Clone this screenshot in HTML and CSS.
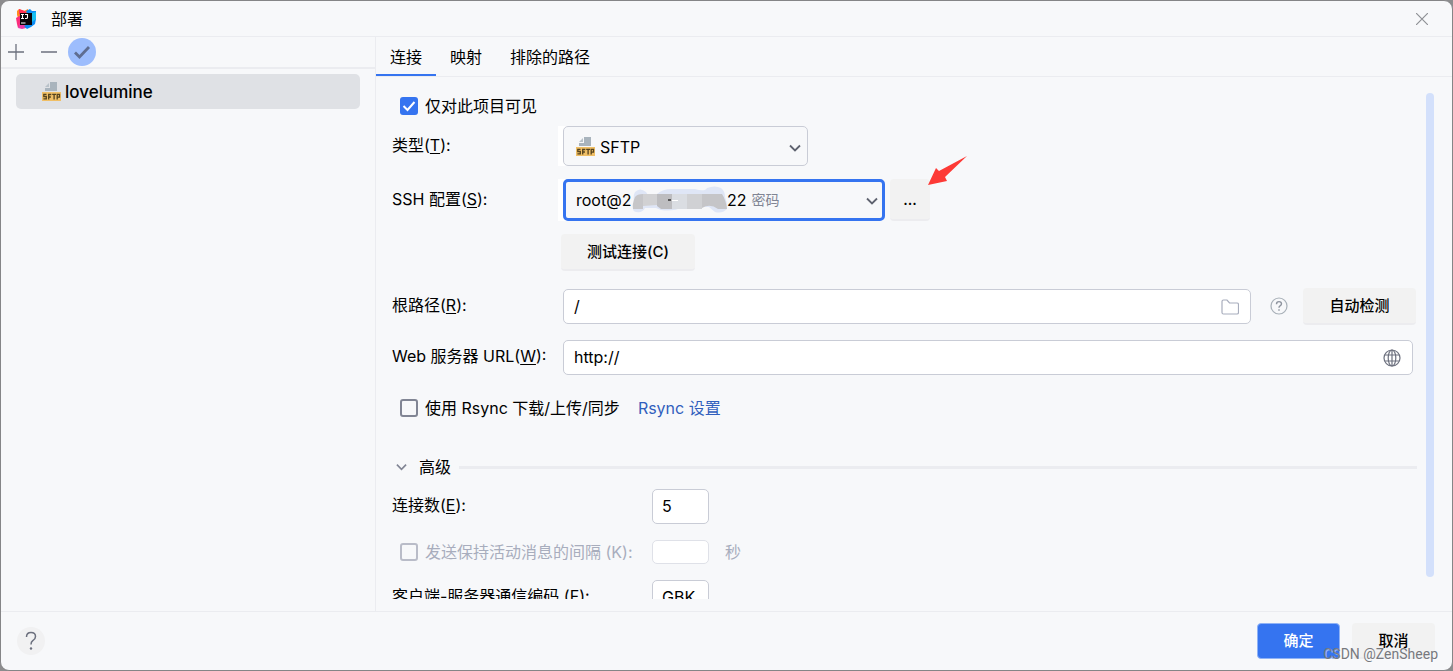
FILE: index.html
```html
<!DOCTYPE html>
<html lang="zh-CN">
<head>
<meta charset="utf-8">
<title>部署</title>
<link rel="stylesheet" href="styles.css">
</head>
<body>
<svg class="defs" aria-hidden="true">
  <symbol id="sftp" viewBox="0 0 19 19">
    <path d="M8 0h7v9H3V6h5z" fill="#a9b4bd"/>
    <path d="M7 1v4H3z" fill="#b9c2c9"/>
    <path d="M0 10h19v9H0z" fill="#f0bf66"/>
    <path d="M4.500 12.300H1.800v2.200h2.500v2.300H1.400M6.700 17.500v-5h2.600M6.700 15h2.200M10.200 12.300h3.800M12.100 12.300v5.200M15.200 17.500v-5.200h2.300v2.900h-2.300" fill="none" stroke="#54431f" stroke-width="1.300"/>
  </symbol>
  <symbol id="chevron" viewBox="0 0 12 8"><path d="M1 1.500l5 5 5-5" fill="none" stroke="currentColor" stroke-width="1.800"/></symbol>
</svg>
<div class="dialog">
  <header class="titlebar">
    <svg class="logo" viewBox="0 0 20 20" aria-hidden="true">
      <path d="M1 2l2-2 5 2 4-2v6L4 14H1l1-5-1-3z" fill="#ff8a1f"/>
      <path d="M3 0l6 2 3 3-6 2-3-2z" fill="#ff3158"/>
      <path d="M0 9l5-3v10l-3 3-1-4z" fill="#fb2d7b"/>
      <path d="M2 19l2-5 8 2-2 3-4 1z" fill="#e93aa8"/>
      <path d="M10 2l4-2 2 2 4 0v8l-1 5-4 3-4 2-3-3 7-4z" fill="#0a8cf5"/>
      <path d="M16 4l4-1v7l-4 3z" fill="#17c0f2"/>
      <path d="M4 4h12v12H4z" fill="#08040a"/>
      <path d="M5 5.500h3M6.500 5.500v4M5 9.500h3M9 5.500h2.500v3q0 1-1.200 1H9M5 14h4.500" fill="none" stroke="#fff" stroke-width="1.100"/>
    </svg>
    <h1 class="title">部署</h1>
    <button class="plain close" aria-label="关闭"><svg viewBox="0 0 12 12" width="12" height="12"><path d="M0 0l12 12M12 0L0 12" stroke="#8f9196" stroke-width="1.200"/></svg></button>
  </header>

  <div class="body">
    <aside class="sidebar">
      <div class="toolbar">
        <button class="plain tool" aria-label="添加"><svg viewBox="0 0 18 18"><path d="M9 1v16M1 9h16" stroke="#6c707e" stroke-width="1.300"/></svg></button>
        <button class="plain tool" aria-label="删除"><svg viewBox="0 0 18 18"><path d="M1 9h16" stroke="#6c707e" stroke-width="1.300"/></svg></button>
        <button class="plain check" aria-label="设为默认"><svg viewBox="0 0 18 18"><path d="M2 9.500l4.500 4.500L16 4" fill="none" stroke="#5f6d91" stroke-width="2.800"/></svg></button>
      </div>
      <ul class="servers">
        <li class="server"><svg class="sftp"><use href="#sftp"/></svg>lovelumine</li>
      </ul>
    </aside>

    <main class="main">
      <nav class="tabs" role="tablist">
        <button class="plain tab active" role="tab" aria-selected="true">连接</button>
        <button class="plain tab" role="tab">映射</button>
        <button class="plain tab" role="tab">排除的路径</button>
      </nav>
      <div class="viewport">
        <form class="form">
          <div class="row visible-row">
            <input class="box" type="checkbox" id="visible" checked><label for="visible">仅对此项目可见</label>
          </div>
          <div class="row type-row">
            <label class="label" for="type">类型(<u>T</u>):</label>
            <div class="combo type">
              <select id="type"><option>SFTP</option></select>
              <svg class="sftp combo-icon"><use href="#sftp"/></svg>
              <svg class="arrow"><use href="#chevron"/></svg>
            </div>
          </div>
          <div class="row ssh-row">
            <label class="label" for="ssh">SSH 配置(<u>S</u>):</label>
            <div class="combo ssh">
              <select id="ssh"><option>root@2</option></select>
              <div class="host">
                <svg class="mask" viewBox="0 0 96 30" aria-hidden="true">
                  <path d="M3 18Q2 10 4 7q5-5 11 0l2 3 9-1q6-5 14-5h24q10 3 12-1 8-3 14 0 4 3 4 9 3 8 2 12-5 5-12 3l-6-5H52q-10 5-22 3l-5-2H14q-2 5-9 4-5-1-2-9z" fill="#dfe6f6"/>
                  <path d="M4 12q2-3 8-3v15H2q-1-5 2-12z" fill="#c6c6c9"/>
                  <path d="M12 9h14v11l-14 1z" fill="#d1d1d3"/>
                  <path d="M26 9h15v15H30l-4-3z" fill="#bdbdc0"/>
                  <path d="M41 9h15v15H41z" fill="#dadde2"/>
                  <path d="M56 9h15v15H56z" fill="#d0d1d4"/>
                  <path d="M71 9h20q4 6 5 15h-9q-8-6-16-1z" fill="#c5c5c8"/>
                  <path d="M37 15h3" stroke="#333" stroke-width="1.500"/><path d="M41 15.500h6" stroke="#fff"/>
                </svg>
                <span>22</span><span class="auth">密码</span>
              </div>
              <svg class="arrow"><use href="#chevron"/></svg>
            </div>
            <div class="more-wrap">
              <button type="button" class="btn more">...</button>
              <svg class="pointer" viewBox="0 0 42 32" aria-hidden="true"><path d="M2 31l8-17 3 3 28-15-22 21 2 4z" fill="#fd3a36"/></svg>
            </div>
          </div>
          <div class="row test-row"><button type="button" class="btn test">测试连接(C)</button></div>
          <div class="row root-row">
            <label class="label" for="root">根路径(<u>R</u>):</label>
            <div class="field">
              <input class="text" id="root" type="text" value="/">
              <svg class="field-icon" viewBox="0 0 18 18"><path d="M1 3.500q0-1.500 1.500-1.500H6l2.500 3H16q1.500 0 1.500 1.500v8q0 1.500-1.500 1.500H2.500Q1 16 1 14.500z" fill="none" stroke="#a8adbd" stroke-width="1.200"/></svg>
            </div>
            <button type="button" class="plain hint" aria-label="帮助"><svg viewBox="0 0 18 18" width="18" height="18"><circle cx="9" cy="9" r="8" fill="none" stroke="#a8b0b8" stroke-width="1.200"/><path d="M6.500 7.200q0-2.600 2.500-2.600t2.500 2.200q0 1.300-1.400 2-1.100.6-1.100 1.900M9 12.200v1.500" fill="none" stroke="#8d939e" stroke-width="1.400"/></svg></button>
            <button type="button" class="btn detect">自动检测</button>
          </div>
          <div class="row url-row">
            <label class="label" for="url">Web 服务器 URL(<u>W</u>):</label>
            <div class="field">
              <input class="text" id="url" type="text" value="http://">
              <svg class="field-icon" viewBox="0 0 18 18"><g fill="none" stroke="#6c707e" stroke-width="1.200"><circle cx="9" cy="9" r="8"/><ellipse cx="9" cy="9" rx="3.800" ry="8"/><path d="M9 1v16M2 6h14M2 12h14"/></g></svg>
            </div>
          </div>
          <div class="row rsync-row">
            <input class="box" type="checkbox" id="rsync"><label for="rsync">使用 Rsync 下载/上传/同步</label>
            <a class="link" href="#">Rsync 设置</a>
          </div>
          <div class="row advanced-row">
            <button type="button" class="plain advanced"><svg class="fold"><use href="#chevron"/></svg>高级</button>
            <span class="rule"></span>
          </div>
          <div class="row count-row">
            <label class="label wide" for="count">连接数(<u>E</u>):</label>
            <input class="text small" id="count" type="text" value="5">
          </div>
          <div class="row alive-row">
            <div class="wide alive"><input class="box" type="checkbox" id="alive" disabled><label for="alive">发送保持活动消息的间隔 (K):</label></div>
            <input class="text small short" type="text" aria-label="间隔秒数" disabled>
            <span class="unit">秒</span>
          </div>
          <div class="row encoding-row">
            <label class="label wide" for="enc">客户端-服务器通信编码 (<u>F</u>):</label>
            <input class="text small" id="enc" type="text" value="GBK">
          </div>
        </form>
        <div class="scrollbar"></div>
      </div>
    </main>
  </div>

  <footer class="footer">
    <button class="plain help" aria-label="帮助"><svg viewBox="0 0 12 20" width="12" height="20"><path d="M1.500 6q0-4.500 4.500-4.500T10.500 5.500q0 2.500-2.700 4.200Q6 11 6 13.500" fill="none" stroke="#6c707e" stroke-width="1.500"/><circle cx="6" cy="17.500" r="1.200" fill="#6c707e"/></svg></button>
    <button class="btn ok">确定</button>
    <button class="btn cancel">取消</button>
    <span class="watermark">CSDN @ZenSheep</span>
  </footer>
</div>
</body>
</html>
```
FILE: styles.css
```css
* { box-sizing: border-box; }
body {
  margin: 0;
  background: #8c8c8e;
  color: #000;
  font: 16px/20px Inter, "Noto Sans CJK SC", sans-serif;
}
button, input, select { font: inherit; color: inherit; }
.defs { position: absolute; width: 0; height: 0; }
.plain { border: 0; padding: 0; background: none; }
.plain svg { display: block; }

.dialog {
  display: flex;
  flex-direction: column;
  height: 100vh;
  overflow: hidden;
  border: 1px solid #858587;
  border-radius: 9px;
  background: #f7f8fa;
}
.titlebar {
  display: flex;
  align-items: center;
  height: 36px;
  padding: 0 24px 0 15px;
  border-bottom: 1px solid #ebecf0;
}
.logo { width: 20px; height: 20px; }
.title { flex: 1; margin: 0 0 0 15px; font-size: 16px; font-weight: 400; }

.body { display: flex; flex: 1; min-height: 0; }
.sidebar { flex: 0 0 375px; border-right: 1px solid #ebecf0; }
.toolbar {
  display: flex;
  align-items: center;
  height: 32px;
  padding-left: 6px;
  border-bottom: 2px solid #ebecf0;
}
.tool svg { width: 18px; height: 18px; }
.tool { margin-right: 15px; }
.check {
  display: grid;
  place-items: center;
  width: 28px;
  height: 28px;
  margin-left: -5px;
  border-radius: 50%;
  background: #9dbdfd;
}
.check svg { width: 18px; height: 18px; }
.servers { margin: 0; padding: 5px 15px; list-style: none; }
.server {
  display: flex;
  align-items: center;
  gap: 4px;
  height: 35px;
  padding-left: 26px;
  border-radius: 5px;
  background: #dfe1e5;
  font-size: 17px;
  font-weight: 500;
}
.sftp { width: 19px; height: 19px; }

.main { display: flex; flex: 1; flex-direction: column; min-width: 0; padding-bottom: 12px; }
.tabs { display: flex; flex: 0 0 40px; border-bottom: 1px solid #ebecf0; }
.tab { height: 39px; padding: 2px 14px 0; border-bottom: 2px solid transparent; }
.tab.active { border-bottom-color: #3574f0; }

.viewport { display: flex; flex: 1; min-height: 0; overflow: hidden; }
.form { flex: 1; min-width: 0; padding: 9px 9px 0 16px; }
.scrollbar { flex: 0 0 8px; height: 484px; margin: 16px 18px 0 0; border-radius: 4px; background: #d3e0fb; }
.row { display: flex; align-items: center; height: 36px; }
.visible-row, .type-row { height: 40px; }
.ssh-row { height: 42px; margin-top: 13px; }
.test-row { margin-top: 13px; padding-left: 169px; }
.root-row { margin-top: 18px; padding-right: 1px; }
.url-row { margin-top: 15px; padding-right: 4px; }
.rsync-row { margin-top: 15px; }
.advanced-row { margin-top: 23px; }
.count-row { margin-top: 3px; }
.alive-row { margin-top: 10px; }
.encoding-row { margin-top: 9px; }
.label { flex: 0 0 166px; padding-bottom: 2px; white-space: nowrap; }
.label u { text-underline-offset: 2px; }

.box {
  flex: none;
  appearance: none;
  width: 18px;
  height: 18px;
  margin: 0 7px 0 8px;
  border: 2px solid #818594;
  border-radius: 3px;
  background: #f7f8fa;
}
.box:checked {
  border: 0;
  background: #3574f0 url("data:image/svg+xml,%3Csvg xmlns='http://www.w3.org/2000/svg' viewBox='0 0 18 18'%3E%3Cpath d='M3.500 9l4 4L14.500 5' fill='none' stroke='%23fff' stroke-width='2'/%3E%3C/svg%3E");
}
.box:disabled { border-color: #b9bcc8; }

.combo { position: relative; height: 100%; padding-left: 5px; background: linear-gradient(to right, #fff 10px, transparent 10px); }
.combo.type { width: 250px; }
.combo.ssh { width: 327px; }
.combo select {
  appearance: none;
  width: 100%;
  height: 100%;
  padding: 0 0 0 12px;
  border: 1px solid #c9ccd6;
  border-radius: 5px;
  background: #f7f8fa;
}
.combo.type select { padding: 2px 0 0 36px; }
.combo.ssh select { border: 3px solid #3574f0; padding-left: 10px; }
.combo-icon { position: absolute; left: 18px; top: 11px; }
.arrow { position: absolute; right: 7px; top: 18px; width: 12px; height: 8px; color: #5f6370; }
.host { position: absolute; left: 73px; top: 6px; display: flex; align-items: center; height: 30px; pointer-events: none; }
.mask { width: 96px; height: 30px; }
.auth { margin-left: 5px; color: #818594; font-size: 14px; }

.btn {
  border: 0;
  border-bottom: 2px solid #ececef;
  border-radius: 4px;
  padding: 2px 0 0;
  background: #f2f2f2;
  font-size: 15px;
  font-weight: 500;
}
.more-wrap { position: relative; height: 100%; margin-left: 5px; }
.more { width: 40px; height: 100%; }
.pointer { position: absolute; left: 36px; top: -25px; width: 42px; height: 32px; }
.test { width: 134px; height: 37px; }
.detect { width: 113px; height: 37px; }

.field { position: relative; flex: 1; height: 35px; margin-left: 5px; }
.text {
  width: 100%;
  height: 35px;
  padding: 0 10px;
  border: 1px solid #c9ccd6;
  border-radius: 5px;
  background: #fff;
}
.field-icon { position: absolute; right: 12px; top: 9px; width: 18px; height: 18px; }
.hint { margin: 0 15px 0 19px; }
.link { margin-left: 18px; color: #315fbd; text-decoration: none; }
.advanced { display: flex; align-items: center; gap: 12px; padding-left: 4px; }
.fold { width: 11px; height: 8px; color: #818594; }
.rule { flex: 1; height: 3px; margin-left: 8px; background: #ebecf0; }
.wide { flex: 0 0 260px; }
.small { width: 57px; padding: 0 9px; }
.short { height: 24px; border-color: #dfe1e8; }
.alive { display: flex; align-items: center; color: #a8adbd; white-space: nowrap; }
.unit { margin-left: 16px; color: #a8adbd; }

.footer {
  position: relative;
  display: flex;
  flex: 0 0 59px;
  align-items: center;
  padding: 0 17px 1px 16px;
  border-top: 1px solid #ebecf0;
}
.help {
  display: grid;
  place-items: center;
  width: 28px;
  height: 28px;
  margin-right: auto;
  border-radius: 50%;
  background: #f1f1f2;
}
.footer .btn { width: 83px; height: 36px; }
.footer .ok { margin-right: 12px; padding: 0; border: 1px solid #8fb2f6; background: #3574f0; color: #fff; }
.watermark {
  position: absolute;
  right: 14px;
  bottom: 6px;
  color: #77797e;
  font: 14px/20px Roboto, Arial, sans-serif;
  text-shadow: 1px 1px 0 #fff8;
  pointer-events: none;
}
```
